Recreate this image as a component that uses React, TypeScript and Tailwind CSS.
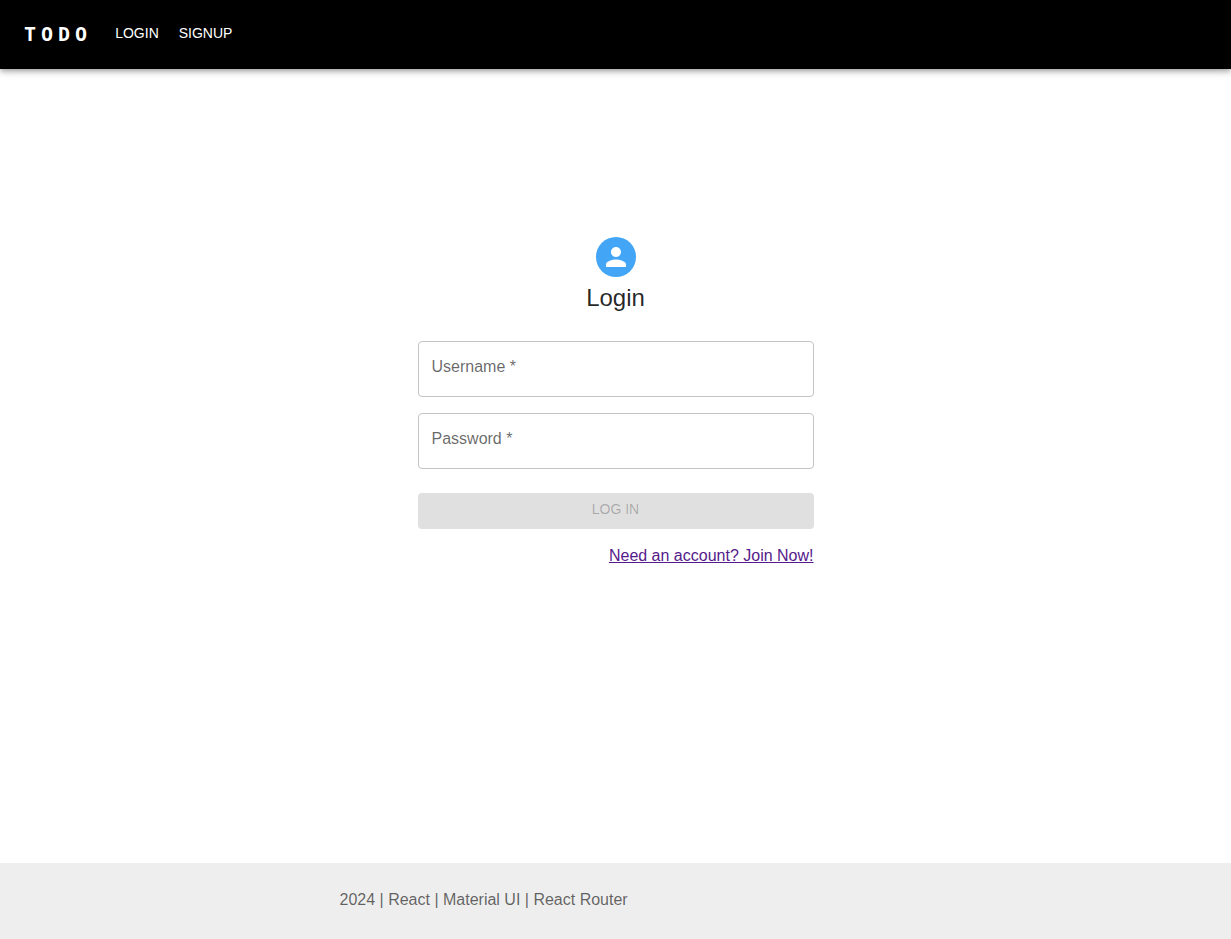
import { useState } from "react";

type FieldProps = {
  id: string;
  label: string;
  type: string;
  value: string;
  onChange: (value: string) => void;
};

function Field({ id, label, type, value, onChange }: FieldProps) {
  return (
    <div className="relative">
      <input
        id={id}
        type={type}
        required
        placeholder=" "
        value={value}
        onChange={(event) => onChange(event.target.value)}
        className="peer h-14 w-full rounded border border-[#c4c4c4] bg-white px-3.5 text-base text-black/85 outline-none focus:border-[#42a5f5]"
      />
      <label
        htmlFor={id}
        className="pointer-events-none absolute left-3.5 top-3.5 bg-white text-base leading-6 text-black/60 peer-focus:-top-2 peer-focus:text-xs peer-focus:leading-4 peer-[:not(:placeholder-shown)]:-top-2 peer-[:not(:placeholder-shown)]:text-xs peer-[:not(:placeholder-shown)]:leading-4"
      >
        {label} *
      </label>
    </div>
  );
}

export default function App() {
  const [username, setUsername] = useState("");
  const [password, setPassword] = useState("");

  return (
    <div className="flex min-h-screen flex-col bg-white font-['Liberation_Sans',Arial,sans-serif] text-black/85">
      <header className="z-10 bg-black px-6 text-white shadow-[0px_2px_4px_-1px_rgba(0,0,0,0.2),0px_4px_5px_0px_rgba(0,0,0,0.14),0px_1px_10px_0px_rgba(0,0,0,0.12)]">
        <nav className="flex h-[69px] items-center">
          <a
            href="#home"
            className="mr-[23px] pb-0.5 font-['DejaVu_Sans_Mono',monospace] text-xl font-bold tracking-[5px]"
          >
            TODO
          </a>
          <div className="flex gap-5 pb-1 text-sm">
            <a href="#login">LOGIN</a>
            <a href="#signup">SIGNUP</a>
          </div>
        </nav>
      </header>

      <main className="mx-auto flex w-full max-w-[444px] grow flex-col px-6 pt-42">
        <div className="flex flex-col items-center">
          <div className="flex size-10 items-center justify-center rounded-full bg-[#42a5f5] text-white">
            <svg viewBox="0 0 24 24" className="size-[30px]" fill="currentColor" aria-hidden="true">
              <path d="M12 12c2.21 0 4-1.79 4-4s-1.79-4-4-4-4 1.79-4 4 1.79 4 4 4m0 2c-2.67 0-8 1.34-8 4v2h16v-2c0-2.66-5.33-4-8-4" />
            </svg>
          </div>
          <h1 className="mt-1 text-2xl leading-[34px]">Login</h1>
        </div>
        <form className="mt-[26px] flex flex-col" onSubmit={(event) => event.preventDefault()}>
          <div className="flex flex-col gap-4">
            <Field id="username" label="Username" type="text" value={username} onChange={setUsername} />
            <Field id="password" label="Password" type="password" value={password} onChange={setPassword} />
          </div>
          <button
            type="submit"
            disabled={!username || !password}
            className="mt-6 h-9 rounded bg-[#42a5f5] pb-1 text-sm text-white disabled:bg-[#e0e0e0] disabled:text-black/26"
          >
            LOG IN
          </button>
          <a
            href="#signup"
            className="mt-[15px] self-end text-base leading-6 text-[#551a8b] underline [text-decoration-skip-ink:none]"
          >
            Need an account? Join Now!
          </a>
        </form>
      </main>

      <footer className="bg-[#eeeeee] py-[25px]">
        <div className="mx-auto w-full max-w-[600px] px-6">
          <p className="pb-0.5 text-base leading-6 text-black/60">2024 | React | Material UI | React Router</p>
        </div>
      </footer>
    </div>
  );
}
